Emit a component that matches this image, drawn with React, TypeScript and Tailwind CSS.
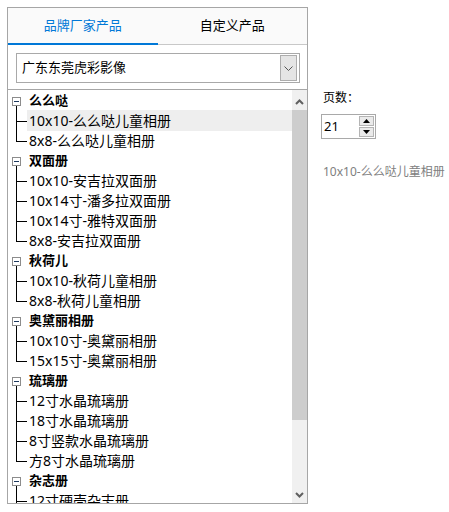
import React from "react";

type Group = { name: string; items: string[] };

const groups: Group[] = [
  { name: "么么哒", items: ["10x10-么么哒儿童相册", "8x8-么么哒儿童相册"] },
  { name: "双面册", items: ["10x10-安吉拉双面册", "10x14寸-潘多拉双面册", "10x14寸-雅特双面册", "8x8-安吉拉双面册"] },
  { name: "秋荷儿", items: ["10x10-秋荷儿童相册", "8x8-秋荷儿童相册"] },
  { name: "奥黛丽相册", items: ["10x10寸-奥黛丽相册", "15x15寸-奥黛丽相册"] },
  { name: "琉璃册", items: ["12寸水晶琉璃册", "18寸水晶琉璃册", "8寸竖款水晶琉璃册", "方8寸水晶琉璃册"] },
  { name: "杂志册", items: ["12寸硬壳杂志册", "10寸硬壳杂志册"] },
];

const font = "font-['Noto_Sans','Noto_Sans_CJK_SC',sans-serif]";

function ParentGutter() {
  return (
    <svg width="19" height="20" className="shrink-0">
      <rect x="4.5" y="7.5" width="8" height="8" fill="#fff" stroke="#8c8c8c" />
      <line x1="6" y1="11.5" x2="11" y2="11.5" stroke="#1f3a5f" />
      <line x1="8.5" y1="16" x2="8.5" y2="20" stroke="#000" />
    </svg>
  );
}

function ChildGutter({ last }: { last: boolean }) {
  return (
    <svg width="19" height="20" className="shrink-0">
      <line x1="8.5" y1="0" x2="8.5" y2={last ? 12 : 20} stroke="#000" />
      <line x1="8" y1="11.5" x2="19" y2="11.5" stroke="#000" />
    </svg>
  );
}

function Chevron({ up }: { up?: boolean }) {
  return (
    <svg width="9" height="6" viewBox="0 0 9 6">
      <path d={up ? "M1 5 L4.5 1.5 L8 5" : "M1 1 L4.5 4.5 L8 1"} fill="none" stroke="#606060" strokeWidth="2" />
    </svg>
  );
}

export default function App() {
  return (
    <div className={`flex pl-[7px] pt-[7px] bg-white min-h-[512px] ${font}`}>
      <div className="w-[301px] h-[497px] border border-[#a6a6a6] flex flex-col">
        {/* tabs */}
        <div className="h-[37px] flex border-b border-[#c8c8c8] bg-[#fafafa] text-[13px]">
          <div className="flex-1 flex items-center justify-center text-[#0078d7] border-b-2 border-[#0078d7] -mb-px pt-[1px]">
            品牌厂家产品
          </div>
          <div className="flex-1 flex items-center justify-center text-black">自定义产品</div>
        </div>

        {/* select */}
        <div className="h-[44px] pt-[8px] pl-[8px] pr-[7px] bg-white">
          <div className="h-[30px] border border-[#a9a9a9] flex items-center justify-between pl-[5px] pr-[2px]">
            <span className="text-[13px] text-black">广东东莞虎彩影像</span>
            <div className="w-[17px] h-[26px] bg-[#e5e5e5] border border-[#adadad] flex items-center justify-center">
              <svg width="9" height="5" viewBox="0 0 9 5">
                <path d="M0.5 0.5 L4.5 4.5 L8.5 0.5" fill="none" stroke="#555" />
              </svg>
            </div>
          </div>
        </div>

        {/* tree */}
        <div className="flex-1 flex border-t border-[#a6a6a6] overflow-hidden">
          <div className="flex-1 overflow-hidden">
            {groups.map((g) => (
              <div key={g.name}>
                <div className="h-[20px] flex items-center">
                  <ParentGutter />
                  <span className="text-[13px] font-bold text-black leading-[20px] pl-[2px]">{g.name}</span>
                </div>
                {g.items.map((it, i) => (
                  <div key={it} className="h-[20px] flex items-center">
                    <ChildGutter last={i === g.items.length - 1} />
                    <span
                      className={`text-[14px] text-black leading-[21px] h-[21px] pl-[2px] pr-[8px] flex-1 whitespace-nowrap ${
                        g.name === "么么哒" && i === 0 ? "bg-[#eeeeee]" : ""
                      }`}
                    >
                      {it}
                    </span>
                  </div>
                ))}
              </div>
            ))}
          </div>
          {/* scrollbar */}
          <div className="w-[15px] flex flex-col bg-[#f0f0f0]">
            <div className="h-[17px] flex items-center justify-center mt-[3px]">
              <Chevron up />
            </div>
            <div className="h-[310px] bg-[#cdcdcd]" />
            <div className="flex-1" />
            <div className="h-[17px] flex items-center justify-center">
              <Chevron />
            </div>
          </div>
        </div>
      </div>

      {/* right side */}
      <div className="ml-[13px] pt-[83px] flex flex-col">
        <div className="text-[12px] leading-[16px] text-black pl-[2px]">页数：</div>
        <div className="mt-[8px] w-[55px] h-[25px] border border-[#a9a9a9] flex items-center justify-between pl-[2px] pr-[1px]">
          <span className="text-[13px] text-black">21</span>
          <div className="w-[15px] h-[21px] flex flex-col gap-[1px]">
            <div className="flex-1 bg-[#eaeaea] border border-[#b4b4b4] flex items-center justify-center">
              <svg width="7" height="4" viewBox="0 0 7 4"><path d="M0 4 L3.5 0 L7 4 Z" fill="#000" /></svg>
            </div>
            <div className="flex-1 bg-[#eaeaea] border border-[#b4b4b4] flex items-center justify-center">
              <svg width="7" height="4" viewBox="0 0 7 4"><path d="M0 0 L3.5 4 L7 0 Z" fill="#000" /></svg>
            </div>
          </div>
        </div>
        <div className="mt-[24px] text-[12px] text-[#808080] pl-[2px]">10x10-么么哒儿童相册</div>
      </div>
    </div>
  );
}
